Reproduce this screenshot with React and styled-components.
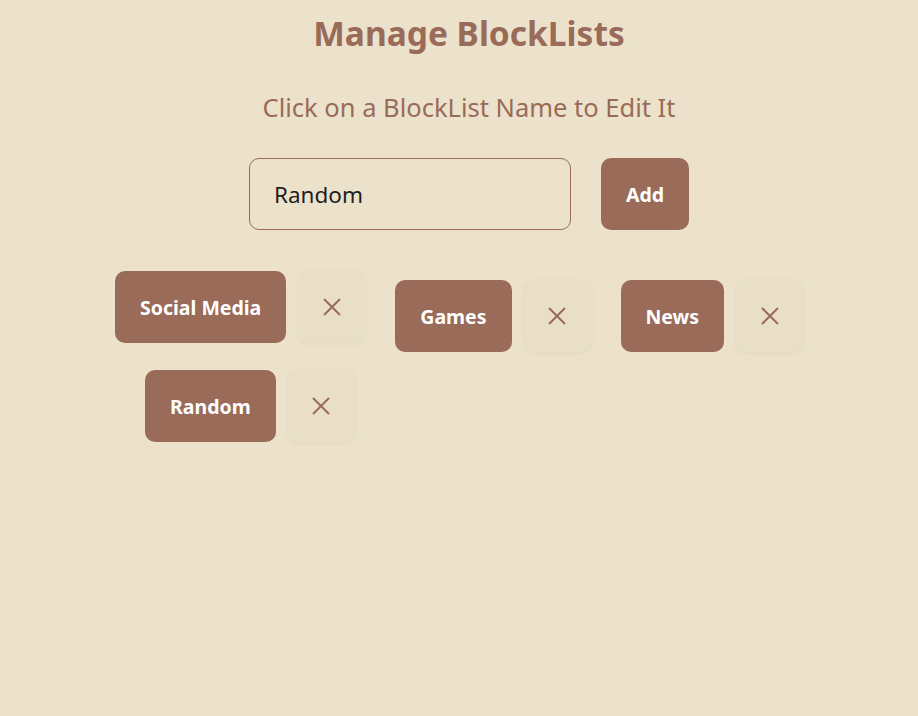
import React, { useState } from "react";
import styled, { createGlobalStyle } from "styled-components";

const GlobalStyle = createGlobalStyle`
  html, body {
    margin: 0;
    padding: 0;
    background-color: #ece2cb;
    font-family: "Noto Sans", "Open Sans", sans-serif;
  }
`;

const Page = styled.div`
  min-height: 716px;
  padding: 10px 0 0 20px;
  box-sizing: border-box;
  display: flex;
  flex-direction: column;
  align-items: center;
`;

const Title = styled.h1`
  margin: 0;
  font-size: 33.5px;
  line-height: 46px;
  font-weight: 700;
  color: #996b58;
`;

const Subtitle = styled.h2`
  margin: 34px 0 0;
  font-size: 25.5px;
  line-height: 34px;
  font-weight: 400;
  color: #996b58;
`;

const Form = styled.div`
  display: flex;
  align-items: center;
  gap: 30px;
  margin-top: 34px;
`;

const Input = styled.input`
  box-sizing: border-box;
  width: 322px;
  height: 72px;
  padding: 0 24px;
  border: 1px solid #996b58;
  border-radius: 10px;
  background: transparent;
  font-family: inherit;
  font-size: 22.5px;
  color: #1f1f1f;
  outline: none;
`;

const Button = styled.button`
  height: 72px;
  padding: 0 25px;
  border: none;
  border-radius: 10px;
  background-color: #996b58;
  color: #ffffff;
  font-family: inherit;
  font-size: 19.5px;
  font-weight: 700;
  cursor: pointer;
`;

const List = styled.div`
  align-self: stretch;
  display: flex;
  flex-wrap: wrap;
  gap: 18px 30px;
  padding-left: 95px;
  margin-top: 50px;
`;

const Group = styled.div`
  display: flex;
  gap: 12px;
  margin-left: ${(p) => p.$indent || 0}px;
  transform: translateY(${(p) => (p.$lifted ? -9 : 0)}px);
`;

const Remove = styled.button`
  width: 67px;
  height: 72px;
  border: none;
  border-radius: 10px;
  background-color: #e9dfc7;
  box-shadow: 0 1px 4px rgba(120, 90, 60, 0.08);
  display: flex;
  align-items: center;
  justify-content: center;
  cursor: pointer;
`;

const CloseIcon = () => (
  <svg width="20" height="20" viewBox="0 0 20 20" fill="none">
    <path d="M2 2 L18 18 M18 2 L2 18" stroke="#996b58" strokeWidth="2" />
  </svg>
);

const lists = [
  { name: "Social Media", lifted: true },
  { name: "Games" },
  { name: "News" },
  { name: "Random", indent: 30 },
];

export default function App() {
  const [value, setValue] = useState("Random");

  return (
    <Page>
      <GlobalStyle />
      <Title>Manage BlockLists</Title>
      <Subtitle>Click on a BlockList Name to Edit It</Subtitle>
      <Form>
        <Input value={value} onChange={(e) => setValue(e.target.value)} />
        <Button>Add</Button>
      </Form>
      <List>
        {lists.map((l) => (
          <Group key={l.name} $lifted={l.lifted} $indent={l.indent}>
            <Button>{l.name}</Button>
            <Remove>
              <CloseIcon />
            </Remove>
          </Group>
        ))}
      </List>
    </Page>
  );
}
